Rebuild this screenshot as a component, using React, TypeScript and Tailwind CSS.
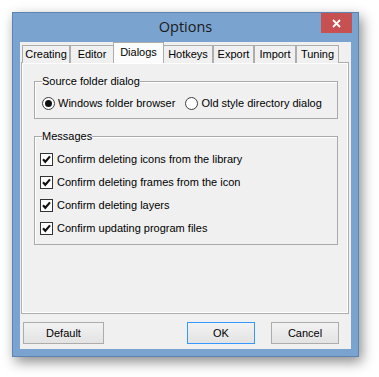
const tabs = [
  { label: "Creating", w: "w-[48px]" },
  { label: "Editor", w: "w-[44px]" },
  { label: "Dialogs", w: "w-[51px]", active: true },
  { label: "Hotkeys", w: "w-[50px]" },
  { label: "Export", w: "w-[41px]" },
  { label: "Import", w: "w-[42px]" },
  { label: "Tuning", w: "w-[43px]" },
];

const messages = [
  "Confirm deleting icons from the library",
  "Confirm deleting frames from the icon",
  "Confirm deleting layers",
  "Confirm updating program files",
];

function Radio({ checked, label }: { checked?: boolean; label: string }) {
  return (
    <label className="flex items-center gap-[3px] leading-[13px]">
      <span className="w-[13px] h-[13px] rounded-full border border-[#3c3c3c] bg-white flex items-center justify-center">
        {checked && <span className="w-[7px] h-[7px] rounded-full bg-[#111]" />}
      </span>
      <span>{label}</span>
    </label>
  );
}

function Check({ label }: { label: string }) {
  return (
    <label className="flex items-center gap-[4px] leading-[13px]">
      <span className="w-[13px] h-[13px] border border-[#333] bg-white flex items-center justify-center">
        <svg width="11" height="11" viewBox="0 0 11 11">
          <path d="M2 5.2 L4.3 7.8 L9 2.4" fill="none" stroke="#111" strokeWidth="2.1" />
        </svg>
      </span>
      <span>{label}</span>
    </label>
  );
}

function Button({ label, focused, w }: { label: string; focused?: boolean; w: string }) {
  return (
    <button
      className={`${w} h-[22px] border ${focused ? "border-[#3399ff]" : "border-[#acacac]"} bg-gradient-to-b from-[#f2f2f2] to-[#e3e3e3] text-[11px] text-black`}
    >
      {label}
    </button>
  );
}

export default function App() {
  return (
    <div
      className="w-[379px] h-[377px] bg-white pt-[12px] pl-[12px] text-[11px] text-black"
      style={{ fontFamily: '"Liberation Sans", Arial, sans-serif' }}
    >
      {/* window */}
      <div className="w-[347px] h-[345px] border border-[#5d83b0] bg-[#7ba3cf] shadow-[3px_5px_12px_rgba(0,0,0,0.45)] flex flex-col">
        {/* title bar */}
        <div className="relative h-[29px] flex items-center justify-center">
          <span
            className="text-[14.5px] text-[#1a1a1a] mt-[-1px]"
            style={{ fontFamily: '"Open Sans", "Noto Sans", sans-serif' }}
          >
            Options
          </span>
          <div className="absolute right-[6px] top-0 w-[31px] h-[20px] bg-[#c75050] flex items-center justify-center">
            <svg width="9" height="9" viewBox="0 0 9 9">
              <path d="M1 1 L8 8 M8 1 L1 8" stroke="#fff" strokeWidth="1.8" />
            </svg>
          </div>
        </div>

        {/* client */}
        <div className="mx-[7px] h-[307px] bg-[#f0f0f0] flex flex-col">
          {/* tabs */}
          <div className="flex items-end h-[21px] pl-[2px] -mb-px relative z-10">
            {tabs.map((t) =>
              t.active ? (
                <div
                  key={t.label}
                  className={`${t.w} h-[21px] border border-b-0 border-[#adadad] bg-[#fcfcfc] flex items-center justify-center pb-[1px] -mx-px`}
                >
                  {t.label}
                </div>
              ) : (
                <div
                  key={t.label}
                  className={`${t.w} h-[18px] border border-b-0 border-[#adadad] bg-[#f0f0f0] flex items-center justify-center`}
                >
                  {t.label}
                </div>
              )
            )}
          </div>

          {/* tab panel */}
          <div className="ml-[1px] mr-[2px] h-[252px] border border-[#adadad] shadow-[inset_1px_1px_0_#fff,inset_-1px_-1px_0_#fff] pl-[12px] pr-[10px] pt-[12px] flex flex-col gap-[11px]">
            <fieldset className="border border-[#a9a9a9] shadow-[inset_1px_1px_0_#fff] h-[44px] px-[7px]">
              <legend className="px-0 leading-[12px]">Source folder dialog</legend>
              <div className="flex items-center gap-[10px] pt-[10px]">
                <Radio checked label="Windows folder browser" />
                <Radio label="Old style directory dialog" />
              </div>
            </fieldset>

            <fieldset className="border border-[#a9a9a9] shadow-[inset_1px_1px_0_#fff] h-[115px] px-[5px]">
              <legend className="px-0 ml-[2px] leading-[12px]">Messages</legend>
              <div className="flex flex-col gap-[10px] pt-[11px]">
                {messages.map((m) => (
                  <Check key={m} label={m} />
                ))}
              </div>
            </fieldset>
          </div>

          {/* buttons */}
          <div className="flex items-center mt-[8px] pl-[3px] pr-[12px]">
            <Button label="Default" w="w-[81px]" />
            <div className="flex-1" />
            <Button label="OK" focused w="w-[68px]" />
            <div className="w-[16px]" />
            <Button label="Cancel" w="w-[68px]" />
          </div>
        </div>
      </div>
    </div>
  );
}
